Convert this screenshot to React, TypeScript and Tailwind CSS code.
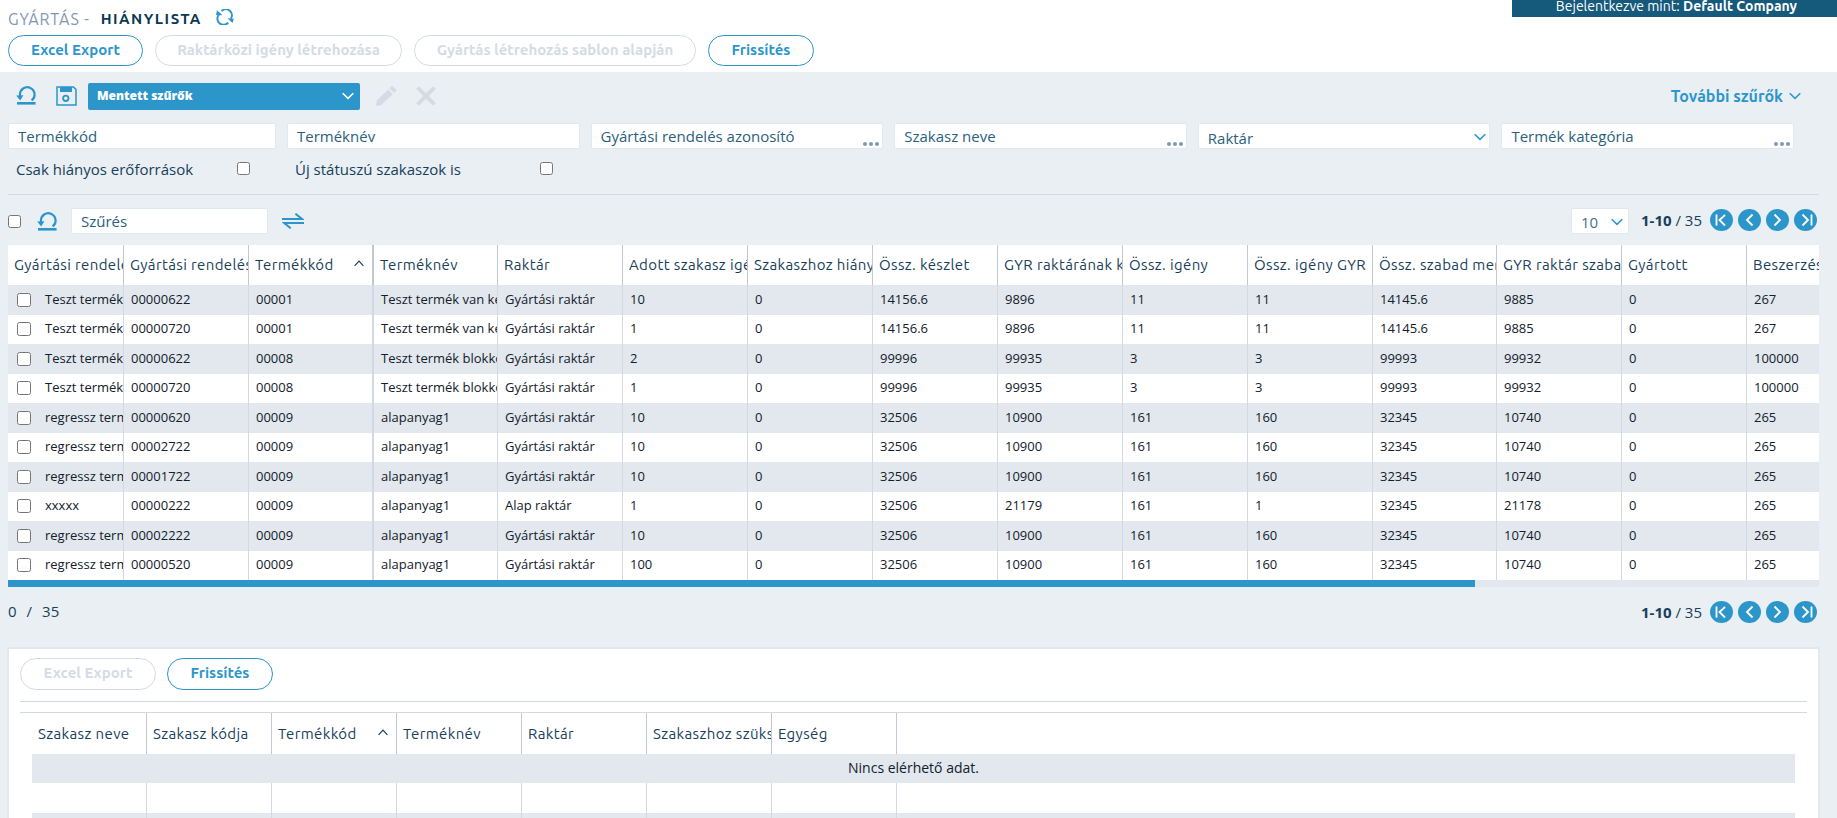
import { useState } from "react";
import type { ReactNode } from "react";
import clsx from "clsx";

const columns = [
  { label: "Gyártási rendelés neve", width: "w-[116px]" },
  { label: "Gyártási rendelés azonosító", width: "w-[125px]" },
  { label: "Termékkód", width: "w-[125px]", sorted: true, thick: true },
  { label: "Terméknév", width: "w-[124px]" },
  { label: "Raktár", width: "w-[125px]" },
  { label: "Adott szakasz igénye", width: "w-[125px]" },
  { label: "Szakaszhoz hiányzik", width: "w-[125px]" },
  { label: "Össz. készlet", width: "w-[125px]" },
  { label: "GYR raktárának készlete", width: "w-[125px]" },
  { label: "Össz. igény", width: "w-[125px]" },
  { label: "Össz. igény GYR", width: "w-[125px]" },
  { label: "Össz. szabad mennyiség", width: "w-[124px]" },
  { label: "GYR raktár szabad", width: "w-[125px]" },
  { label: "Gyártott", width: "w-[125px]" },
  { label: "Beszerzés", width: "w-[125px]" },
];

const rows = [
  ["Teszt termék", "00000622", "00001", "Teszt termék van készlet", "Gyártási raktár", "10", "0", "14156.6", "9896", "11", "11", "14145.6", "9885", "0", "267"],
  ["Teszt termék", "00000720", "00001", "Teszt termék van készlet", "Gyártási raktár", "1", "0", "14156.6", "9896", "11", "11", "14145.6", "9885", "0", "267"],
  ["Teszt termék", "00000622", "00008", "Teszt termék blokkolt", "Gyártási raktár", "2", "0", "99996", "99935", "3", "3", "99993", "99932", "0", "100000"],
  ["Teszt termék", "00000720", "00008", "Teszt termék blokkolt", "Gyártási raktár", "1", "0", "99996", "99935", "3", "3", "99993", "99932", "0", "100000"],
  ["regressz termék", "00000620", "00009", "alapanyag1", "Gyártási raktár", "10", "0", "32506", "10900", "161", "160", "32345", "10740", "0", "265"],
  ["regressz termék", "00002722", "00009", "alapanyag1", "Gyártási raktár", "10", "0", "32506", "10900", "161", "160", "32345", "10740", "0", "265"],
  ["regressz termék", "00001722", "00009", "alapanyag1", "Gyártási raktár", "10", "0", "32506", "10900", "161", "160", "32345", "10740", "0", "265"],
  ["xxxxx", "00000222", "00009", "alapanyag1", "Alap raktár", "1", "0", "32506", "21179", "161", "1", "32345", "21178", "0", "265"],
  ["regressz termék", "00002222", "00009", "alapanyag1", "Gyártási raktár", "10", "0", "32506", "10900", "161", "160", "32345", "10740", "0", "265"],
  ["regressz termék", "00000520", "00009", "alapanyag1", "Gyártási raktár", "100", "0", "32506", "10900", "161", "160", "32345", "10740", "0", "265"],
];

const detailColumns = [
  { label: "Szakasz neve", width: "w-[115px]" },
  { label: "Szakasz kódja", width: "w-[125px]" },
  { label: "Termékkód", width: "w-[125px]", sorted: true },
  { label: "Terméknév", width: "w-[125px]" },
  { label: "Raktár", width: "w-[125px]" },
  { label: "Szakaszhoz szükséges", width: "w-[125px]" },
  { label: "Egység", width: "w-[125px]" },
];

function Chevron({ className }: { className?: string }) {
  return (
    <svg viewBox="0 0 12 8" className={clsx("h-2 w-3", className)} fill="none" stroke="currentColor" strokeWidth="1.5">
      <path d="M0.7 1.2 6 6.4l5.3-5.2" />
    </svg>
  );
}

function SortIcon() {
  return (
    <svg viewBox="0 0 10 7" className="mr-2 mb-1 h-[7px] w-2.5 shrink-0" fill="none" stroke="currentColor" strokeWidth="1.2">
      <path d="M.6 5.8 5 1.2l4.4 4.6" />
    </svg>
  );
}

function RefreshIcon() {
  return (
    <svg viewBox="0 0 18 16" className="h-4 w-[18px]" fill="none" stroke="currentColor" strokeWidth="2">
      <path d="M5.6 2.1A6 6 0 0 1 14.9 9.6" />
      <path d="M12.2 13.7A6 6 0 0 1 2.9 5.6" />
      <path d="M11.4 9.2 17.8 9.8 16.6 14z" fill="currentColor" stroke="none" />
      <path d="M6.6 6.2 0 5.9 1 1.2z" fill="currentColor" stroke="none" />
    </svg>
  );
}

function ResetIcon() {
  return (
    <svg viewBox="0 0 20 19" className="h-[19px] w-5" fill="none" stroke="currentColor">
      <path d="M4 10.5V9a7.3 7.3 0 1 1 11.6 5.4" strokeWidth="2.2" />
      <path d="M.2 9.6 4.2 14.4 7.4 9.2z" fill="currentColor" stroke="none" />
      <path d="M1 17.3h18.6" strokeWidth="2.6" />
    </svg>
  );
}

function SaveIcon() {
  return (
    <svg viewBox="0 0 21 20" className="h-5 w-[21px]" fill="none" stroke="currentColor">
      <path d="M1 1h16.5l2.5 2.5V19H1z" strokeWidth="1.5" />
      <path d="M4 1h12v5H4z" fill="currentColor" stroke="none" />
      <circle cx="9.8" cy="12.3" r="2.7" strokeWidth="1.8" />
    </svg>
  );
}

function PencilIcon() {
  return (
    <svg viewBox="0 0 21 20" className="h-5 w-[21px]" fill="currentColor">
      <path d="M0 20l.9-5.4L12.2 3.4l4.7 4.6L5.5 19.1z" />
      <path d="M13.4 2.3 15.2.5q.9-.8 1.8 0l2.9 2.8q.9.9 0 1.8l-1.8 1.8z" />
    </svg>
  );
}

function CrossIcon() {
  return (
    <svg viewBox="0 0 20 20" className="size-5" stroke="currentColor" strokeWidth="4">
      <path d="M1.6 1.6l16.8 16.8M18.4 1.6 1.6 18.4" />
    </svg>
  );
}

function SwapIcon() {
  return (
    <svg viewBox="0 0 22 16" className="h-4 w-[22px]" fill="none" stroke="currentColor" strokeWidth="2">
      <path d="M0 6h20L13.4.7" />
      <path d="M22 10H2.2l6.5 5.3" />
    </svg>
  );
}

function PillButton({ children, disabled, className }: { children: ReactNode; disabled?: boolean; className: string }) {
  return (
    <button
      disabled={disabled}
      className={clsx(
        "rounded-full border bg-white text-center text-[15px] font-bold whitespace-nowrap",
        disabled ? "border-[#d3dce5] text-[#d3dce5]" : "border-[#2c96cb] text-[#2c96cb]",
        className
      )}
    >
      {children}
    </button>
  );
}

function TextField({ label, lookup }: { label: string; lookup?: boolean }) {
  return (
    <div className="relative">
      <input
        aria-label={label}
        placeholder={label}
        className="h-[26px] w-full rounded-xs border border-[#e2e9ee] bg-white px-[9px] text-[15px] placeholder:text-[#2a5f7d]"
      />
      {lookup && (
        <button aria-label={label + " keresése"} className="absolute right-1 bottom-1 flex gap-0.5 text-[#7e9abb]">
          <span className="size-1 rounded-full bg-current" />
          <span className="size-1 rounded-full bg-current" />
          <span className="size-1 rounded-full bg-current" />
        </button>
      )}
    </div>
  );
}

const pagerIcons = [
  { label: "Első oldal", d: "M6.5 5.5v11M15 6l-5.5 5 5.5 5.5" },
  { label: "Előző oldal", d: "M14.5 5.5 9 11l5.5 5.5" },
  { label: "Következő oldal", d: "M8.5 5.5 14 11l-5.5 5.5" },
  { label: "Utolsó oldal", d: "M8.5 5.5 14 11l-5.5 5.5M17.5 5.5v11" },
];

function Pager() {
  return (
    <div className="flex items-center gap-2 pr-0.5">
      <span className="text-[15px] leading-5">
        <b>1-10</b> / 35
      </span>
      <div className="flex gap-[5px]">
        {pagerIcons.map((icon) => (
          <button key={icon.label} aria-label={icon.label}>
            <svg viewBox="0 0 23 22" className="h-[22px] w-[23px]" fill="none" stroke="#fff" strokeWidth="1.8">
              <ellipse cx="11.5" cy="11" rx="11.5" ry="11" fill="#2c96cb" stroke="none" />
              <path d={icon.d} />
            </svg>
          </button>
        ))}
      </div>
    </div>
  );
}

function HeadLabel({ label, sorted }: { label: string; sorted?: boolean }) {
  return (
    <div className="flex items-center justify-between overflow-hidden pt-0.5 pl-1.5 tracking-wide whitespace-nowrap">
      {label}
      {sorted && <SortIcon />}
    </div>
  );
}

export default function App() {
  const [selected, setSelected] = useState<number[]>([]);

  const toggle = (i: number) =>
    setSelected((prev) => (prev.includes(i) ? prev.filter((n) => n !== i) : [...prev, i]));

  return (
    <div className="flex h-screen flex-col overflow-hidden bg-[#eaeff3] font-['Ubuntu','Open_Sans',sans-serif] text-[#17405b]">
      <header className="h-[72px] shrink-0 bg-white pl-2">
        <div className="flex h-[35px] items-start justify-between">
          <div className="flex items-start gap-3.5 pt-[9px]">
            <h1 className="flex gap-[11px] leading-5">
              <span className="text-base leading-5 tracking-wider text-[#8098b3]">GYÁRTÁS -</span>
              <span className="text-[15px] leading-5 font-bold tracking-widest text-[#0c3850]">HIÁNYLISTA</span>
            </h1>
            <button aria-label="Újratöltés" className="text-[#2c96cb]">
              <RefreshIcon />
            </button>
          </div>
          <div className="bg-[#15597b] pr-10 pb-1 pl-11 text-sm leading-[13px] text-white">
            Bejelentkezve mint: <b>Default Company</b>
          </div>
        </div>
        <div className="flex gap-3">
          <PillButton className="h-[31px] w-[135px]">Excel Export</PillButton>
          <PillButton className="h-[31px] w-[247px]" disabled>Raktárközi igény létrehozása</PillButton>
          <PillButton className="h-[31px] w-[282px]" disabled>Gyártás létrehozás sablon alapján</PillButton>
          <PillButton className="h-[31px] w-[106px]">Frissítés</PillButton>
        </div>
      </header>

      <main className="shrink-0 font-['Open_Sans',sans-serif]">
        <section className="mr-[18px] ml-2 border-b border-[#d1d9e4] pt-2.5">
          <div className="flex items-center text-[#2c96cb]">
            <button aria-label="Szűrők törlése" className="ml-2">
              <ResetIcon />
            </button>
            <button aria-label="Szűrő mentése" className="ml-5">
              <SaveIcon />
            </button>
            <div className="relative ml-[11px]">
              <select
                aria-label="Mentett szűrők"
                className="h-[27px] w-[272px] appearance-none rounded-xs bg-[#2c96cb] px-[9px] text-xs font-extrabold text-white"
              >
                <option>Mentett szűrők</option>
              </select>
              <Chevron className="pointer-events-none absolute top-2.5 right-1.5 text-white" />
            </div>
            <button aria-label="Szerkesztés" disabled className="ml-4 text-[#d3dce5]">
              <PencilIcon />
            </button>
            <button aria-label="Törlés" disabled className="ml-[19px] text-[#d3dce5]">
              <CrossIcon />
            </button>
            <button className="mr-[18px] ml-auto flex items-center gap-1.5 font-['Ubuntu','Open_Sans',sans-serif] text-base font-bold">
              További szűrők
              <Chevron />
            </button>
          </div>

          <div className="mt-[13px] mr-[25px] grid grid-cols-[268px_repeat(5,1fr)] gap-x-[11px]">
            <TextField label="Termékkód" />
            <TextField label="Terméknév" />
            <TextField label="Gyártási rendelés azonosító" lookup />
            <TextField label="Szakasz neve" lookup />
            <div className="relative">
              <select
                aria-label="Raktár"
                className="h-[26px] w-full appearance-none rounded-xs border border-[#e2e9ee] bg-white px-[9px] pt-[3px] text-[15px] text-[#2a5f7d]"
              >
                <option>Raktár</option>
              </select>
              <Chevron className="pointer-events-none absolute top-2.5 right-1 text-[#2c96cb]" />
            </div>
            <TextField label="Termék kategória" lookup />
          </div>

          <div className="flex pt-[9px] pb-[15px] pl-2 text-[15px] leading-5">
            <label className="flex w-[234px] items-center justify-between">
              Csak hiányos erőforrások
              <input type="checkbox" className="size-[13px]" />
            </label>
            <label className="ml-[45px] flex w-[258px] items-center justify-between">
              Új státuszú szakaszok is
              <input type="checkbox" className="size-[13px]" />
            </label>
          </div>
        </section>

        <section className="mr-[18px] ml-2">
          <div className="flex h-[50px] items-center pt-[3px]">
            <input type="checkbox" aria-label="Összes kijelölése" className="size-[13px]" />
            <button aria-label="Szűrés törlése" className="ml-4 text-[#2c96cb]">
              <ResetIcon />
            </button>
            <div className="ml-[14px] w-[197px]">
              <TextField label="Szűrés" />
            </div>
            <button aria-label="Oszlopok cseréje" className="ml-[14px] text-[#2c96cb]">
              <SwapIcon />
            </button>
            <div className="relative mr-3 ml-auto">
              <select
                aria-label="Sorok száma"
                className="h-[26px] w-[58px] appearance-none rounded-xs border border-[#e2e9ee] bg-white px-[9px] pt-0.5 text-[15px] text-[#47718c]"
              >
                <option>10</option>
              </select>
              <Chevron className="pointer-events-none absolute top-2.5 right-1.5 text-[#2c96cb]" />
            </div>
            <div className="pb-[3px]">
              <Pager />
            </div>
          </div>

          <div className="overflow-hidden">
            <table className="w-[1864px] table-fixed border-separate border-spacing-0">
              <thead>
                <tr className="h-10 bg-white">
                  {columns.map((col) => (
                    <th
                      key={col.label}
                      className={clsx(
                        "border-[#bfc9d1] p-0 text-left font-['Ubuntu','Open_Sans',sans-serif] text-[15px] font-normal",
                        col.thick ? "border-r-2" : "border-r",
                        col.width
                      )}
                    >
                      <HeadLabel label={col.label} sorted={col.sorted} />
                    </th>
                  ))}
                </tr>
              </thead>
              <tbody>
                {rows.map((row, i) => (
                  <tr key={i} className="h-[29px] text-[13px] text-[#12202b] odd:h-[30px] odd:bg-[#e2e8ee] even:bg-white">
                    {row.map((cell, c) => (
                      <td key={c} className={clsx("border-[#d1d9e4] p-0", columns[c].thick ? "border-r-2" : "border-r")}>
                        {c === 0 ? (
                          <label className="flex items-center gap-[14px] overflow-hidden pl-[9px] whitespace-nowrap">
                            <input
                              type="checkbox"
                              className="size-[14px] shrink-0"
                              checked={selected.includes(i)}
                              onChange={() => toggle(i)}
                            />
                            {cell}
                          </label>
                        ) : (
                          <div className="overflow-hidden pl-[7px] whitespace-nowrap">{cell}</div>
                        )}
                      </td>
                    ))}
                  </tr>
                ))}
              </tbody>
            </table>
          </div>
          <div className="h-[7px] bg-[#e2e8ed]">
            <div className="h-full w-[81%] bg-[#2c96cb]" />
          </div>

          <div className="flex h-[50px] items-center justify-between text-[15px]">
            <span className="flex gap-2.5">
              <span>{selected.length}</span>
              <span>/</span>
              <span>35</span>
            </span>
            <Pager />
          </div>
        </section>

        <section className="mt-2.5 mr-[17px] ml-[7px] border-2 border-[#e2e9ee] bg-white px-[11px] pt-[9px] font-['Ubuntu','Open_Sans',sans-serif]">
          <div className="flex gap-[11px] pb-[11px]">
            <PillButton className="h-8 w-[136px]" disabled>Excel Export</PillButton>
            <PillButton className="h-8 w-[106px]">Frissítés</PillButton>
          </div>
          <div className="h-3 border-y border-[#d1d9e4]" />
          <div className="px-3">
            <table className="w-full table-fixed border-separate border-spacing-0">
              <thead>
                <tr className="h-[41px]">
                  {detailColumns.map((col) => (
                    <th
                      key={col.label}
                      className={clsx("border-r border-[#bfc9d1] p-0 text-left text-[15px] font-normal", col.width)}
                    >
                      <HeadLabel label={col.label} sorted={col.sorted} />
                    </th>
                  ))}
                  <th className="p-0" />
                </tr>
              </thead>
              <tbody>
                <tr className="h-[29px] bg-[#e2e8ee]">
                  <td colSpan={8} className="p-0 text-center font-['Open_Sans',sans-serif] text-sm text-[#12202b]">
                    Nincs elérhető adat.
                  </td>
                </tr>
                {[0, 1, 2, 3].map((i) => (
                  <tr key={i} className="h-[30px] even:bg-white odd:bg-[#e2e8ee]">
                    {detailColumns.map((col) => (
                      <td key={col.label} className="border-r border-[#d1d9e4] p-0" />
                    ))}
                    <td className="p-0" />
                  </tr>
                ))}
              </tbody>
            </table>
          </div>
        </section>
      </main>
    </div>
  );
}
